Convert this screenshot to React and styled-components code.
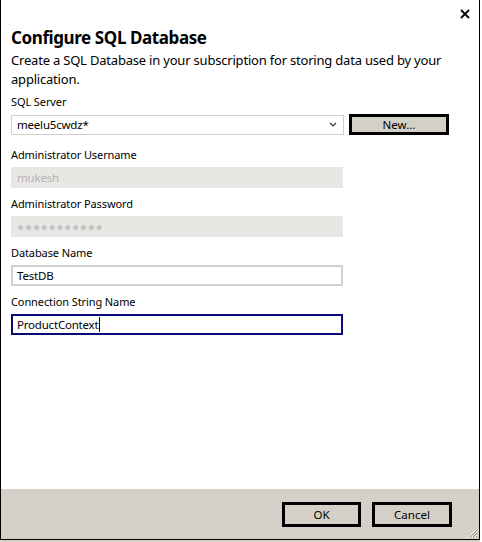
import React from 'react';
import styled, { createGlobalStyle } from 'styled-components';

const GlobalStyle = createGlobalStyle`
  html, body {
    margin: 0;
    padding: 0;
    background: #d4d0c8;
  }
  body {
    font-family: "Noto Sans", "Open Sans", sans-serif;
    color: #000;
  }
`;

const Window = styled.div`
  width: 482px;
  height: 542px;
  display: flex;
  background: #d4d0c8;
`;

const Dialog = styled.div`
  width: 478px;
  height: 539px;
  border-left: 1px solid #000;
  border-right: 1px solid #000;
  border-bottom: 1px solid #000;
  background: #fff;
  display: flex;
  flex-direction: column;
  position: relative;
`;

const Edge = styled.div`
  width: 2px;
  height: 542px;
  background: #fff;
`;

const Close = styled.button`
  position: absolute;
  top: 7px;
  right: 7px;
  width: 14px;
  height: 14px;
  padding: 0;
  border: 0;
  background: transparent;
  display: flex;
  align-items: center;
  justify-content: center;
`;

const Body = styled.div`
  flex: 1;
  padding: 26px 0 0 10px;
  display: flex;
  flex-direction: column;
`;

const Title = styled.h1`
  margin: 0;
  font-size: 17px;
  font-weight: 700;
  line-height: 24px;
  letter-spacing: -0.4px;
`;

const Desc = styled.p`
  margin: 1px 0 5px;
  font-size: 13px;
  line-height: 19px;
  width: 440px;
  letter-spacing: -0.2px;
`;

const Label = styled.div`
  font-size: 11px;
  line-height: 16px;
  letter-spacing: -0.1px;
  margin-top: ${(p) => p.$top || 0}px;
  margin-bottom: 4px;
`;

const Row = styled.div`
  display: flex;
  align-items: center;
  gap: 5px;
`;

const Select = styled.div`
  height: 18px;
  border: 1px solid #d4d0c8;
  display: flex;
  align-items: center;
  justify-content: space-between;
  padding: 0 6px 0 5px;
  box-sizing: content-box;
  width: 320px;
  font-size: 11.5px;
  letter-spacing: -0.2px;
`;

const Field = styled.div`
  width: 332px;
  height: 21px;
  box-sizing: border-box;
  display: flex;
  align-items: center;
  padding-left: ${(p) => (p.$disabled ? 6 : 4)}px;
  font-size: 11.5px;
  letter-spacing: -0.2px;
  background: ${(p) => (p.$disabled ? '#e8e7e4' : '#fff')};
  color: ${(p) => (p.$disabled ? '#b4b4b4' : '#000')};
  border: ${(p) =>
    p.$focused ? '2px solid #0a0a78' : p.$disabled ? '0' : '2px solid #d4d0c8'};
`;

const Caret = styled.span`
  display: inline-block;
  width: 1px;
  height: 15px;
  background: #000;
  margin-left: 1px;
`;

const Dots = styled.span`
  letter-spacing: 0.6px;
  font-size: 12px;
  color: #c4c4c4;
`;

const Button = styled.button`
  width: ${(p) => p.$w}px;
  height: ${(p) => p.$h}px;
  box-sizing: border-box;
  border: 3px solid #000;
  background: #d4d0c8;
  font-family: inherit;
  font-size: 11.5px;
  color: #000;
  padding: 0;
`;

const Footer = styled.div`
  height: 50px;
  background: #d4d0c8;
  display: flex;
  justify-content: flex-end;
  align-items: flex-start;
  padding: 13px 27px 0 0;
  gap: 11px;
  box-sizing: border-box;
  position: relative;
`;

const Grip = styled.svg`
  position: absolute;
  right: 1px;
  bottom: 1px;
`;

export default function App() {
  return (
    <Window>
      <GlobalStyle />
      <Dialog>
        <Close aria-label="Close">
          <svg width="10" height="10" viewBox="0 0 10 10">
            <path d="M1 1L9 9M9 1L1 9" stroke="#000" strokeWidth="1.8" />
          </svg>
        </Close>
        <Body>
          <Title>Configure SQL Database</Title>
          <Desc>
            Create a SQL Database in your subscription for storing data used by your application.
          </Desc>
          <Label>SQL Server</Label>
          <Row>
            <Select>
              <span>meelu5cwdz*</span>
              <svg width="8" height="5" viewBox="0 0 8 5">
                <path d="M1 1L4 4L7 1" stroke="#333" strokeWidth="1.2" fill="none" />
              </svg>
            </Select>
            <Button $w={100} $h={21}>New...</Button>
          </Row>
          <Label $top={12}>Administrator Username</Label>
          <Field $disabled>mukesh</Field>
          <Label $top={8}>Administrator Password</Label>
          <Field $disabled>
            <Dots>●●●●●●●●●●●</Dots>
          </Field>
          <Label $top={8}>Database Name</Label>
          <Field>TestDB</Field>
          <Label $top={8}>Connection String Name</Label>
          <Field $focused>
            ProductContext
            <Caret />
          </Field>
        </Body>
        <Footer>
          <Button $w={79} $h={25}>OK</Button>
          <Button $w={80} $h={25}>Cancel</Button>
          <Grip width="11" height="11" viewBox="0 0 11 11">
            <path d="M10 2L2 10M10 5L5 10M10 8L8 10" stroke="#fff" strokeWidth="1" />
            <path d="M10 3L3 10M10 6L6 10M10 9L9 10" stroke="#808080" strokeWidth="1" />
          </Grip>
        </Footer>
      </Dialog>
      <Edge />
    </Window>
  );
}
